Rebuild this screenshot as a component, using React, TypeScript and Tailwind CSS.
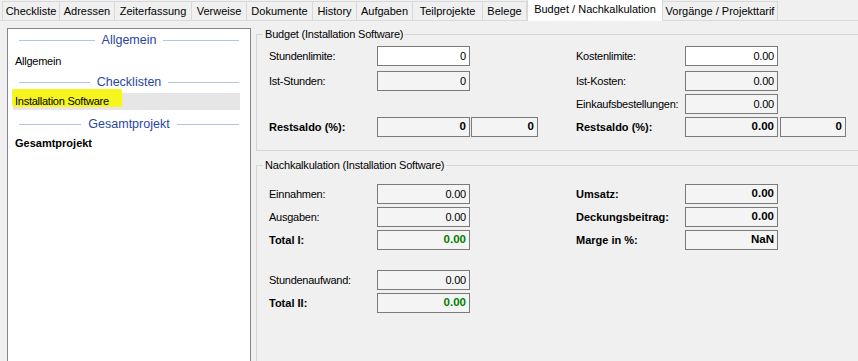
import React from 'react';

const tabs: { label: string; w: string; active?: boolean }[] = [
  { label: 'Checkliste', w: 'w-[58px]' },
  { label: 'Adressen', w: 'w-[55px]' },
  { label: 'Zeiterfassung', w: 'w-[77px]' },
  { label: 'Verweise', w: 'w-[55px]' },
  { label: 'Dokumente', w: 'w-[66px]' },
  { label: 'History', w: 'w-[44px]' },
  { label: 'Aufgaben', w: 'w-[56px]' },
  { label: 'Teilprojekte', w: 'w-[70px]' },
  { label: 'Belege', w: 'w-[44px]' },
  { label: 'Budget / Nachkalkulation', w: 'w-[136px]', active: true },
  { label: 'Vorgänge / Projekttarif', w: 'w-[115px]' },
];

const GroupHeader: React.FC<{ title: string }> = ({ title }) => (
  <div className="flex items-center gap-[7px] h-[22px] ml-[11px] mr-[11px]">
    <div className="flex-1 h-px bg-[#b4c3e8]" />
    <span className="text-[12.5px] text-[#2a47a0] leading-none">{title}</span>
    <div className="flex-1 h-px bg-[#b4c3e8]" />
  </div>
);

interface FieldProps {
  value: string;
  white?: boolean;
  bold?: boolean;
  green?: boolean;
  w?: string;
  className?: string;
}

const Field: React.FC<FieldProps> = ({ value, white, bold, green, w = 'w-[93px]', className = '' }) => (
  <div
    className={`${w} h-[20px] border border-[#7a7a7a] flex items-center justify-end pr-[3px] ${
      white ? 'bg-white' : 'bg-[#f4f4f4]'
    } ${bold ? 'font-bold text-[11.5px]' : 'tracking-[-0.2px]'} ${green ? 'text-[#008000]' : 'text-black'} ${className}`}
  >
    {value}
  </div>
);

const Label: React.FC<{ text: string; bold?: boolean; w: string }> = ({ text, bold, w }) => (
  <div className={`${w} shrink-0 ${bold ? 'font-bold' : 'tracking-[-0.25px]'}`}>{text}</div>
);

const Row: React.FC<{ left?: React.ReactNode; right?: React.ReactNode; className?: string }> = ({ left, right, className = '' }) => (
  <div className={`flex h-[20px] items-center ${className}`}>
    <div className="w-[307px] flex items-center shrink-0">{left}</div>
    <div className="flex items-center">{right}</div>
  </div>
);

export default function App() {
  return (
    <div className="w-[858px] h-[361px] overflow-hidden bg-[#f0f0f0] text-[11px] text-black font-['Liberation_Sans',Arial,sans-serif]">
      {/* tab strip */}
      <div className="flex h-[21px] pl-[2px] items-end border-b border-[#dadada]">
        {tabs.map((t) =>
          t.active ? (
            <div
              key={t.label}
              className={`${t.w} h-[22px] -mb-px bg-white border border-b-0 border-[#d9d9d9] flex items-start pt-[3px] justify-center leading-[13px] relative z-10`}
            >
              {t.label}
            </div>
          ) : (
            <div
              key={t.label}
              className={`${t.w} h-[19px] bg-[#f0f0f0] border border-b-0 border-l-0 first:border-l border-[#d9d9d9] flex items-center justify-center leading-[13px]`}
            >
              {t.label}
            </div>
          )
        )}
      </div>

      <div className="flex">
        {/* left list */}
        <div className="ml-[7px] mt-[7px] w-[244px] h-[400px] bg-white border border-[#828790] shrink-0">
          <GroupHeader title="Allgemein" />
          <div className="h-[20px] pl-[7px] flex items-center tracking-[-0.25px]">Allgemein</div>
          <GroupHeader title="Checklisten" />
          <div className="relative ml-[5px] mr-[10px] h-[17px] bg-[#e6e6e6] flex items-center">
            <div className="absolute left-[-1px] top-[-4px] w-[110px] h-[18px] bg-[#f6f51e] rounded-[2px]" />
            <span className="relative pl-[2px] tracking-[-0.25px]">Installation Software</span>
          </div>
          <div className="mt-[3px]">
            <GroupHeader title="Gesamtprojekt" />
          </div>
          <div className="h-[16px] pl-[7px] flex items-center font-bold">Gesamtprojekt</div>
        </div>

        {/* right side */}
        <div className="ml-[5px] mt-[7px] w-[620px] shrink-0 flex flex-col">
          <fieldset className="border border-[#d5d5d5] pl-[12px] pt-[5px] pb-[13px]">
            <legend className="-ml-[6px] px-[2px] leading-[13px] tracking-[-0.2px]">Budget (Installation Software)</legend>
            <Row
              left={<><Label w="w-[108px]" text="Stundenlimite:" /><Field value="0" white /></>}
              right={<><Label w="w-[109px]" text="Kostenlimite:" /><Field value="0.00" white /></>}
            />
            <Row
              className="mt-[5px]"
              left={<><Label w="w-[108px]" text="Ist-Stunden:" /><Field value="0" /></>}
              right={<><Label w="w-[109px]" text="Ist-Kosten:" /><Field value="0.00" /></>}
            />
            <Row
              className="mt-[3px]"
              right={<><Label w="w-[109px]" text="Einkaufsbestellungen:" /><Field value="0.00" /></>}
            />
            <Row
              className="mt-[3px]"
              left={
                <>
                  <Label w="w-[108px]" text="Restsaldo (%):" bold />
                  <Field value="0" bold />
                  <Field value="0" bold w="w-[67px]" className="ml-[1px]" />
                </>
              }
              right={
                <>
                  <Label w="w-[109px]" text="Restsaldo (%):" bold />
                  <Field value="0.00" bold />
                  <Field value="0" bold w="w-[66px]" className="ml-[2px]" />
                </>
              }
            />
          </fieldset>

          <fieldset className="mt-[8px] border border-[#d5d5d5] pl-[12px] pt-[12px] h-[230px]">
            <legend className="-ml-[6px] px-[2px] leading-[13px] tracking-[-0.2px]">Nachkalkulation (Installation Software)</legend>
            <Row
              left={<><Label w="w-[108px]" text="Einnahmen:" /><Field value="0.00" /></>}
              right={<><Label w="w-[109px]" text="Umsatz:" bold /><Field value="0.00" bold /></>}
            />
            <Row
              className="mt-[3px]"
              left={<><Label w="w-[108px]" text="Ausgaben:" /><Field value="0.00" /></>}
              right={<><Label w="w-[109px]" text="Deckungsbeitrag:" bold /><Field value="0.00" bold /></>}
            />
            <Row
              className="mt-[3px]"
              left={<><Label w="w-[108px]" text="Total I:" bold /><Field value="0.00" bold green /></>}
              right={<><Label w="w-[109px]" text="Marge in %:" bold /><Field value="NaN" bold /></>}
            />
            <Row
              className="mt-[20px]"
              left={<><Label w="w-[108px]" text="Stundenaufwand:" /><Field value="0.00" /></>}
            />
            <Row
              className="mt-[3px]"
              left={<><Label w="w-[108px]" text="Total II:" bold /><Field value="0.00" bold green /></>}
            />
          </fieldset>
        </div>
      </div>
    </div>
  );
}
